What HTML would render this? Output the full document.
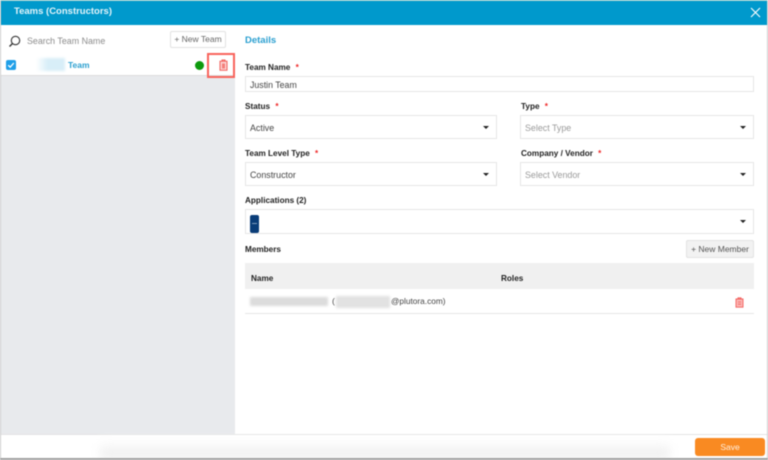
<!DOCTYPE html>
<html><head><meta charset="utf-8">
<style>
html,body{margin:0;padding:0;background:#fff}
#p{position:relative;width:768px;height:460px;overflow:hidden;background:#fff;font-family:"Liberation Sans",sans-serif;filter:blur(.4px)}
#p div,#p span.a,#p svg{position:absolute}
.l{font-size:8.2px;font-weight:700;color:#222;white-space:nowrap;line-height:10px}
.l i{color:#e22;font-style:normal;font-weight:700;margin-left:3px}
.b{background:#fff;border:1px solid #e6e6e6;box-sizing:border-box;font-size:8.9px;color:#444;line-height:24px;padding-left:4px;white-space:nowrap}
.ph{color:#9a9a9a}
.c{width:0;height:0;border-left:3.5px solid transparent;border-right:3.5px solid transparent;border-top:3.5px solid #222}
.t{white-space:nowrap}
</style></head><body>
<div id="p">
<div style="left:0;top:0;width:768px;height:1px;background:#9cc"></div>
<div style="left:0;top:1px;width:768px;height:24px;background:#0099cc"></div>
<div class="t" style="left:14px;top:6px;font-size:9.5px;font-weight:700;color:#e4f4fa;line-height:12px">Teams (Constructors)</div>
<svg style="left:750px;top:7px" width="11" height="11" viewBox="0 0 11 11"><path d="M1 1L10 10M10 1L1 10" stroke="#fff" stroke-width="1.1" fill="none"/></svg>

<div style="left:0;top:0;width:1px;height:460px;background:#ccc"></div>
<div style="left:767px;top:0;width:1px;height:460px;background:#ccc"></div>

<!-- sidebar -->
<div style="left:1px;top:76px;width:234px;height:358px;background:#e8eaed"></div>
<div style="left:1px;top:75px;width:234px;height:1px;background:#dcdcdc"></div>
<svg style="left:8px;top:35px" width="13" height="13" viewBox="0 0 13 13"><circle cx="7.5" cy="5.5" r="4.2" fill="none" stroke="#333" stroke-width="1.1"/><path d="M4.4 8.6L1.5 11.5" stroke="#333" stroke-width="1.4"/></svg>
<div class="t" style="left:27px;top:36px;font-size:8.9px;color:#8c8c8c;line-height:11px">Search Team Name</div>
<div style="left:170px;top:31px;width:56px;height:17px;box-sizing:border-box;border:1px solid #e2e2e2;border-radius:2px;background:#fff;font-size:8.5px;color:#666;text-align:center;line-height:15px">+ New Team</div>
<div style="left:6px;top:60px;width:10px;height:10px;background:#1f9fe8;border-radius:2px"></div>
<svg style="left:6px;top:60px" width="10" height="10" viewBox="0 0 10 10"><path d="M2.2 5.2L4.2 7.2L7.8 3" stroke="#fff" stroke-width="1.3" fill="none"/></svg>
<div style="left:36px;top:58px;width:29px;height:13px;background:linear-gradient(90deg,#fff 0,#d8eef8 40%,#d8eef8 100%);filter:blur(1.2px)"></div>
<div class="t" style="left:68px;top:60px;font-size:8.5px;font-weight:700;color:#2a9fd0;line-height:11px">Team</div>
<div style="left:195px;top:61px;width:9px;height:9px;border-radius:50%;background:#0d9a0d"></div>
<div style="left:207px;top:53px;width:28px;height:25px;box-sizing:border-box;border:2px solid #f8645c"></div>
<svg style="left:219px;top:59px" width="9" height="12" viewBox="0 0 9 12"><path d="M1 2.2H8V11.2H1Z M3 2.2V1H6V2.2" fill="#fbd3d2" stroke="#f2605c" stroke-width="1"/><path d="M3 4.5V9.5H6V4.5Z" fill="#f47f7b"/></svg>

<!-- details -->
<div class="t" style="left:245px;top:34.5px;font-size:9.5px;font-weight:700;color:#2a9fd0;line-height:12px">Details</div>

<div class="l" style="left:245px;top:63px">Team Name <i>*</i></div>
<div class="b" style="left:245px;top:76px;width:509px;height:16px;line-height:16px;font-size:8.8px">Justin Team</div>

<div class="l" style="left:245px;top:102px">Status <i>*</i></div>
<div class="b" style="left:245px;top:115px;width:252px;height:24px">Active</div>
<div class="c" style="left:483px;top:126px"></div>

<div class="l" style="left:521px;top:102px">Type <i>*</i></div>
<div class="b ph" style="left:520px;top:115px;width:234px;height:24px">Select Type</div>
<div class="c" style="left:740px;top:126px"></div>

<div class="l" style="left:245px;top:149px">Team Level Type <i>*</i></div>
<div class="b" style="left:245px;top:162px;width:252px;height:24px">Constructor</div>
<div class="c" style="left:483px;top:173px"></div>

<div class="l" style="left:521px;top:149px">Company / Vendor <i>*</i></div>
<div class="b ph" style="left:520px;top:162px;width:234px;height:24px">Select Vendor</div>
<div class="c" style="left:740px;top:173px"></div>

<div class="l" style="left:245px;top:196px">Applications (2)</div>
<div class="b" style="left:245px;top:209px;width:509px;height:25px"></div>
<div style="left:250px;top:215px;width:9px;height:18px;background:#0a3d78;border-radius:2px"></div>
<div style="left:252px;top:223px;width:5px;height:1px;background:#7f9dbd"></div>
<div class="c" style="left:740px;top:220px"></div>

<div class="l" style="left:245px;top:245px">Members</div>
<div style="left:686px;top:240px;width:68px;height:18px;box-sizing:border-box;border:1px solid #e2e2e2;border-radius:2px;background:#f2f2f2;font-size:8.5px;color:#555;text-align:center;line-height:16px;white-space:nowrap">+ New Member</div>

<div style="left:245px;top:263px;width:509px;height:26px;background:#f0f0f0"></div>
<div class="l" style="left:251px;top:274px">Name</div>
<div class="l" style="left:501px;top:274px">Roles</div>
<div style="left:250px;top:297px;width:78px;height:9px;background:#dcdcdc;filter:blur(1.4px)"></div>
<div class="t" style="left:332px;top:296px;font-size:8.5px;color:#444;line-height:11px">(</div>
<div style="left:336px;top:296px;width:54px;height:12px;background:#e2e2e2;filter:blur(1.2px)"></div>
<div class="t" style="left:391px;top:296px;font-size:8.3px;color:#444;line-height:11px">@plutora.com)</div>
<svg style="left:735px;top:297px" width="9" height="11" viewBox="0 0 9 11"><path d="M1 2H8V10.2H1Z M3 2V.8H6V2" fill="#fbb4b2" stroke="#f2605c" stroke-width=".9"/><path d="M3 5H6M3 7.2H6" stroke="#f2605c" stroke-width=".8"/></svg>
<div style="left:245px;top:313px;width:509px;height:1px;background:#e6e6e6"></div>

<!-- footer -->
<div style="left:1px;top:434px;width:766px;height:1px;background:#e4e4e4"></div>
<div style="left:100px;top:440px;width:570px;height:18px;background:linear-gradient(180deg,#fff 0,#f8f8f8 40%,#e8e8e8 100%);filter:blur(5px)"></div>
<div style="left:695px;top:438px;width:70px;height:18px;background:#f98a22;border-radius:3px;color:#fff0e0;font-size:8.5px;text-align:center;line-height:18px">Save</div>
<div style="left:0;top:458px;width:768px;height:2px;background:#a0a0a0"></div>
</div>
</body></html>
